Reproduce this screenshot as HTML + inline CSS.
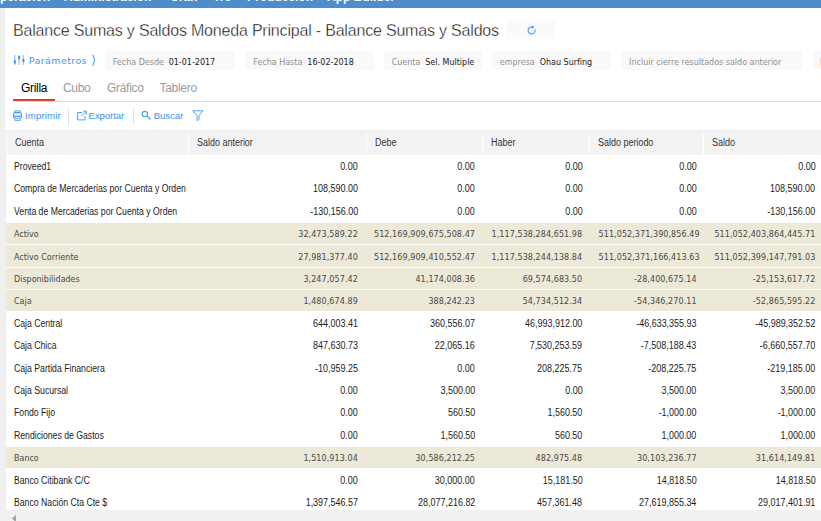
<!DOCTYPE html>
<html lang="es">
<head>
<meta charset="utf-8">
<title>Balance Sumas y Saldos</title>
<style>
html,body{margin:0;padding:0;}
body{width:821px;height:521px;overflow:hidden;background:#fff;position:relative;font-family:"Liberation Sans",sans-serif;color:#222;}
#topbar{position:absolute;left:0;top:0;width:821px;height:7.5px;background:#4d8dcb;overflow:hidden;}
#topbar span{position:absolute;top:-10.8px;font:bold 12px/16px "Liberation Sans",sans-serif;color:#fff;white-space:nowrap;}
#lstrip{position:absolute;left:0;top:8px;width:5px;height:513px;background:#f0f0f0;}
#title{position:absolute;left:13px;top:20px;font-size:16px;line-height:22px;color:#000;-webkit-text-stroke:0.4px #fff;white-space:nowrap;letter-spacing:-0.19px;}
#refresh{position:absolute;left:507px;top:21px;width:48px;height:18px;background:#fafafa;border-radius:2px;}
.pbox{position:absolute;top:51px;height:18.6px;background:#f9f9f9;border-radius:3px;font:8px/18px "DejaVu Sans",sans-serif;white-space:nowrap;overflow:hidden;}
.pbox .l{color:#909090;position:absolute;top:3px;}
.pbox .v{color:#222;position:absolute;top:3px;}
#param{position:absolute;left:13px;top:51.5px;height:18px;font:9.5px/18px "DejaVu Sans",sans-serif;color:#3f97f2;white-space:nowrap;letter-spacing:0.42px;}
.tab{position:absolute;top:80px;font:12px/16px "Liberation Sans",sans-serif;color:#9a9a9a;white-space:nowrap;letter-spacing:-0.3px;}
#tabline{position:absolute;left:13px;top:101px;width:808px;height:1px;background:#dcdcdc;}
#tabred{position:absolute;left:13px;top:99px;width:42px;height:2px;background:#e0402a;}
.tb{position:absolute;top:107.5px;height:16px;font:9.6px/16px "Liberation Sans",sans-serif;color:#3a93f2;white-space:nowrap;letter-spacing:-0.1px;}
.sep{position:absolute;top:107px;width:1px;height:19px;background:#e4e4e4;}
#hdrline{position:absolute;left:5px;top:130px;width:816px;height:1px;background:#ececec;}
#hdr{position:absolute;left:7px;top:131px;width:814px;height:23.6px;background:#f3f3f3;}
#hdr span{position:absolute;top:0;font:9.6px/24px "Liberation Sans",sans-serif;color:#333;white-space:nowrap;transform:scale(0.935,1.045);transform-origin:0 60%;}
#hdr i{position:absolute;top:1px;width:1px;height:22.6px;background:#fff;}
#grid{position:absolute;left:0;top:0;width:821px;height:510px;overflow:hidden;}
.r{position:absolute;left:6px;width:815px;height:20.8px;font:9.6px/22.5px "Liberation Sans",sans-serif;color:#1c1c1c;}
.bg{position:absolute;left:6px;width:815px;background:#ece9d8;}
.r.g{font-family:"DejaVu Sans",sans-serif;font-size:8px;line-height:24px;color:#484848;letter-spacing:0;}
.r span{position:absolute;top:0;white-space:nowrap;}
.r .a{left:8px;transform:scale(0.905,1.045);transform-origin:0 60%;}
.r .n{text-align:right;transform:scale(0.935,1.045);transform-origin:100% 60%;}
.r.g .a{transform:none;}
.r.g .n{letter-spacing:0.08px;transform:none;}
#hscroll{position:absolute;left:5px;top:510px;width:816px;height:11px;background:#f1f1f1;}
#tbicons{position:absolute;left:0;top:104px;}
#gridl{position:absolute;left:5px;top:130px;width:1px;height:391px;background:#eeeeee;}
</style>
</head>
<body>
<div id="topbar">
<span style="left:-9.4px">Operación</span><span style="left:64px">Administración</span><span style="left:170px">Cran</span><span style="left:213px">Tre</span><span style="left:247px">Producción</span><span style="left:327px">App Builder</span>
</div>
<div id="lstrip"></div>
<div id="title">Balance Sumas y Saldos Moneda Principal - Balance Sumas y Saldos</div>
<div id="refresh"><svg width="48" height="18" viewBox="0 0 48 18"><path d="M27.9 8.2 A3.5 3.5 0 1 1 25.6 6.1" fill="none" stroke="#52a6f8" stroke-width="1.2"/><path d="M24.6 4.2 L27.6 6.0 L24.9 7.9 Z" fill="#52a6f8"/></svg></div>

<div id="param"><svg style="position:absolute;left:0;top:0" width="14" height="18" viewBox="13 51.5 14 18"><g stroke="#8ec5fb" stroke-width="1.1" fill="none"><path d="M14.8 54.5V64.6M19.1 54.5V64.6M23.4 54.5V64.6"/></g><g fill="#2f8ff5"><rect x="13.9" y="59.8" width="1.9" height="3.2"/><rect x="18.2" y="55.6" width="1.9" height="3.2"/><rect x="22.5" y="58.3" width="1.9" height="3.2"/></g></svg><span style="position:absolute;left:15.7px;top:0">Parámetros</span><span style="position:absolute;left:78.3px;top:-0.6px;font-size:12.5px">⟩</span></div>

<div class="pbox" style="left:105px;width:130px"><span class="l" style="left:7.7px">Fecha Desde</span><span class="v" style="left:63.7px">01-01-2017</span></div>
<div class="pbox" style="left:245px;width:129px"><span class="l" style="left:8.2px">Fecha Hasta</span><span class="v" style="left:62.3px">16-02-2018</span></div>
<div class="pbox" style="left:384px;width:98px"><span class="l" style="left:7.7px">Cuenta</span><span class="v" style="left:41.2px">Sel. Multiple</span></div>
<div class="pbox" style="left:492px;width:119px"><span class="l" style="left:7.8px">empresa</span><span class="v" style="left:47.7px">Ohau Surfing</span></div>
<div class="pbox" style="left:621px;width:181px"><span class="l" style="left:8.1px">Incluir cierre resultados saldo anterior</span></div>
<div class="pbox" style="left:812.5px;width:20px"><span class="l" style="left:7.5px">I</span></div>

<div class="tab" style="left:21px;color:#000">Grilla</div>
<div class="tab" style="left:63px">Cubo</div>
<div class="tab" style="left:107px">Gráfico</div>
<div class="tab" style="left:159.5px">Tablero</div>
<div id="tabline"></div>
<div id="tabred"></div>

<svg id="tbicons" width="215" height="24" viewBox="0 104 215 24"><g fill="none" stroke="#4fa4f6" stroke-width="1">
<path d="M14.5 112.5V110.9H20.5V112.5"/>
<rect x="13.5" y="112.5" width="8" height="5.5" rx="1" fill="#b5d9fc"/>
<path d="M15 114.5H20" stroke="#fff"/>
<rect x="15" y="116.5" width="5" height="3.8" fill="#fff"/>
<path d="M16.3 118.5H18.7"/>
<path d="M82.3 112.5H77.6V119.9H85V116"/>
<path d="M81.3 116.3L86.3 111.3M83 111.2H86.4V114.6"/>
<circle cx="144.9" cy="114" r="2.7" stroke-width="1.2"/>
<path d="M146.9 116L150.6 119.6" stroke-width="1.4"/>
<path d="M192.8 110.8H203L199 115.6V119.6L197 120.6V115.6Z" stroke-linejoin="round"/>
<path d="M197.2 115.6H198.8V119.6L197.2 120.4Z" fill="#a9d3fb" stroke="none"/>
</g></svg>
<div class="tb" style="left:25px;letter-spacing:0.15px">Imprimir</div>
<div class="sep" style="left:68px"></div>
<div class="tb" style="left:88.6px">Exportar</div>
<div class="sep" style="left:133px"></div>
<div class="tb" style="left:153.8px">Buscar</div>

<div id="hdrline"></div>
<div id="gridl"></div>
<div id="hdr">
<span style="left:7.6px">Cuenta</span><span style="left:189.8px">Saldo anterior</span><span style="left:368.2px">Debe</span><span style="left:484px">Haber</span><span style="left:591.1px">Saldo periodo</span><span style="left:704.5px">Saldo</span>
<i style="left:181px"></i><i style="left:359px"></i><i style="left:475px"></i><i style="left:582px"></i><i style="left:696px"></i>
</div>
<div id="grid">
<div class="r" style="top:155.9px"><span class="a">Proveed1</span><span class="n" style="right:463.2px">0.00</span><span class="n" style="right:346.0px">0.00</span><span class="n" style="right:238.8px">0.00</span><span class="n" style="right:124.4px">0.00</span><span class="n" style="right:5.5px">0.00</span></div>
<div class="r" style="top:178.3px"><span class="a">Compra de Mercaderias por Cuenta y Orden</span><span class="n" style="right:463.2px">108,590.00</span><span class="n" style="right:346.0px">0.00</span><span class="n" style="right:238.8px">0.00</span><span class="n" style="right:124.4px">0.00</span><span class="n" style="right:5.5px">108,590.00</span></div>
<div class="r" style="top:200.7px"><span class="a">Venta de Mercaderias por Cuenta y Orden</span><span class="n" style="right:463.2px">-130,156.00</span><span class="n" style="right:346.0px">0.00</span><span class="n" style="right:238.8px">0.00</span><span class="n" style="right:124.4px">0.00</span><span class="n" style="right:5.5px">-130,156.00</span></div>
<div class="bg" style="top:223px;height:21px"></div>
<div class="r g" style="top:223.1px"><span class="a">Activo</span><span class="n" style="right:463.2px">32,473,589.22</span><span class="n" style="right:346.0px">512,169,909,675,508.47</span><span class="n" style="right:238.8px">1,117,538,284,651.98</span><span class="n" style="right:121.4px">511,052,371,390,856.49</span><span class="n" style="right:5.6px">511,052,403,864,445.71</span></div>
<div class="bg" style="top:245px;height:22px"></div>
<div class="r g" style="top:245.5px"><span class="a">Activo Corriente</span><span class="n" style="right:463.2px">27,981,377.40</span><span class="n" style="right:346.0px">512,169,909,410,552.47</span><span class="n" style="right:238.8px">1,117,538,244,138.84</span><span class="n" style="right:121.4px">511,052,371,166,413.63</span><span class="n" style="right:5.6px">511,052,399,147,791.03</span></div>
<div class="bg" style="top:268px;height:21px"></div>
<div class="r g" style="top:267.9px"><span class="a">Disponibilidades</span><span class="n" style="right:463.2px">3,247,057.42</span><span class="n" style="right:346.0px">41,174,008.36</span><span class="n" style="right:238.8px">69,574,683.50</span><span class="n" style="right:124.4px">-28,400,675.14</span><span class="n" style="right:5.6px">-25,153,617.72</span></div>
<div class="bg" style="top:290px;height:21px"></div>
<div class="r g" style="top:290.3px"><span class="a">Caja</span><span class="n" style="right:463.2px">1,480,674.89</span><span class="n" style="right:346.0px">388,242.23</span><span class="n" style="right:238.8px">54,734,512.34</span><span class="n" style="right:124.4px">-54,346,270.11</span><span class="n" style="right:5.6px">-52,865,595.22</span></div>
<div class="r" style="top:312.7px"><span class="a">Caja Central</span><span class="n" style="right:463.2px">644,003.41</span><span class="n" style="right:346.0px">360,556.07</span><span class="n" style="right:238.8px">46,993,912.00</span><span class="n" style="right:124.4px">-46,633,355.93</span><span class="n" style="right:5.5px">-45,989,352.52</span></div>
<div class="r" style="top:335.1px"><span class="a">Caja Chica</span><span class="n" style="right:463.2px">847,630.73</span><span class="n" style="right:346.0px">22,065.16</span><span class="n" style="right:238.8px">7,530,253.59</span><span class="n" style="right:124.4px">-7,508,188.43</span><span class="n" style="right:5.5px">-6,660,557.70</span></div>
<div class="r" style="top:357.5px"><span class="a">Caja Partida Financiera</span><span class="n" style="right:463.2px">-10,959.25</span><span class="n" style="right:346.0px">0.00</span><span class="n" style="right:238.8px">208,225.75</span><span class="n" style="right:124.4px">-208,225.75</span><span class="n" style="right:5.5px">-219,185.00</span></div>
<div class="r" style="top:379.9px"><span class="a">Caja Sucursal</span><span class="n" style="right:463.2px">0.00</span><span class="n" style="right:346.0px">3,500.00</span><span class="n" style="right:238.8px">0.00</span><span class="n" style="right:124.4px">3,500.00</span><span class="n" style="right:5.5px">3,500.00</span></div>
<div class="r" style="top:402.3px"><span class="a">Fondo Fijo</span><span class="n" style="right:463.2px">0.00</span><span class="n" style="right:346.0px">560.50</span><span class="n" style="right:238.8px">1,560.50</span><span class="n" style="right:124.4px">-1,000.00</span><span class="n" style="right:5.5px">-1,000.00</span></div>
<div class="r" style="top:424.7px"><span class="a">Rendiciones de Gastos</span><span class="n" style="right:463.2px">0.00</span><span class="n" style="right:346.0px">1,560.50</span><span class="n" style="right:238.8px">560.50</span><span class="n" style="right:124.4px">1,000.00</span><span class="n" style="right:5.5px">1,000.00</span></div>
<div class="bg" style="top:447px;height:21px"></div>
<div class="r g" style="top:447.1px"><span class="a">Banco</span><span class="n" style="right:463.2px">1,510,913.04</span><span class="n" style="right:346.0px">30,586,212.25</span><span class="n" style="right:238.8px">482,975.48</span><span class="n" style="right:124.4px">30,103,236.77</span><span class="n" style="right:5.6px">31,614,149.81</span></div>
<div class="r" style="top:469.5px"><span class="a">Banco Citibank C/C</span><span class="n" style="right:463.2px">0.00</span><span class="n" style="right:346.0px">30,000.00</span><span class="n" style="right:238.8px">15,181.50</span><span class="n" style="right:124.4px">14,818.50</span><span class="n" style="right:5.5px">14,818.50</span></div>
<div class="r" style="top:491.9px"><span class="a">Banco Nación Cta Cte $</span><span class="n" style="right:463.2px">1,397,546.57</span><span class="n" style="right:346.0px">28,077,216.82</span><span class="n" style="right:238.8px">457,361.48</span><span class="n" style="right:124.4px">27,619,855.34</span><span class="n" style="right:5.5px">29,017,401.91</span></div>
</div>
<div id="hscroll"><svg width="30" height="11" viewBox="5 510 30 11" style="position:absolute;left:0;top:0"><path d="M16 514.8 L12 518.5 L16 522.2 Z" fill="#a3a3a3"/></svg></div>
</body>
</html>
